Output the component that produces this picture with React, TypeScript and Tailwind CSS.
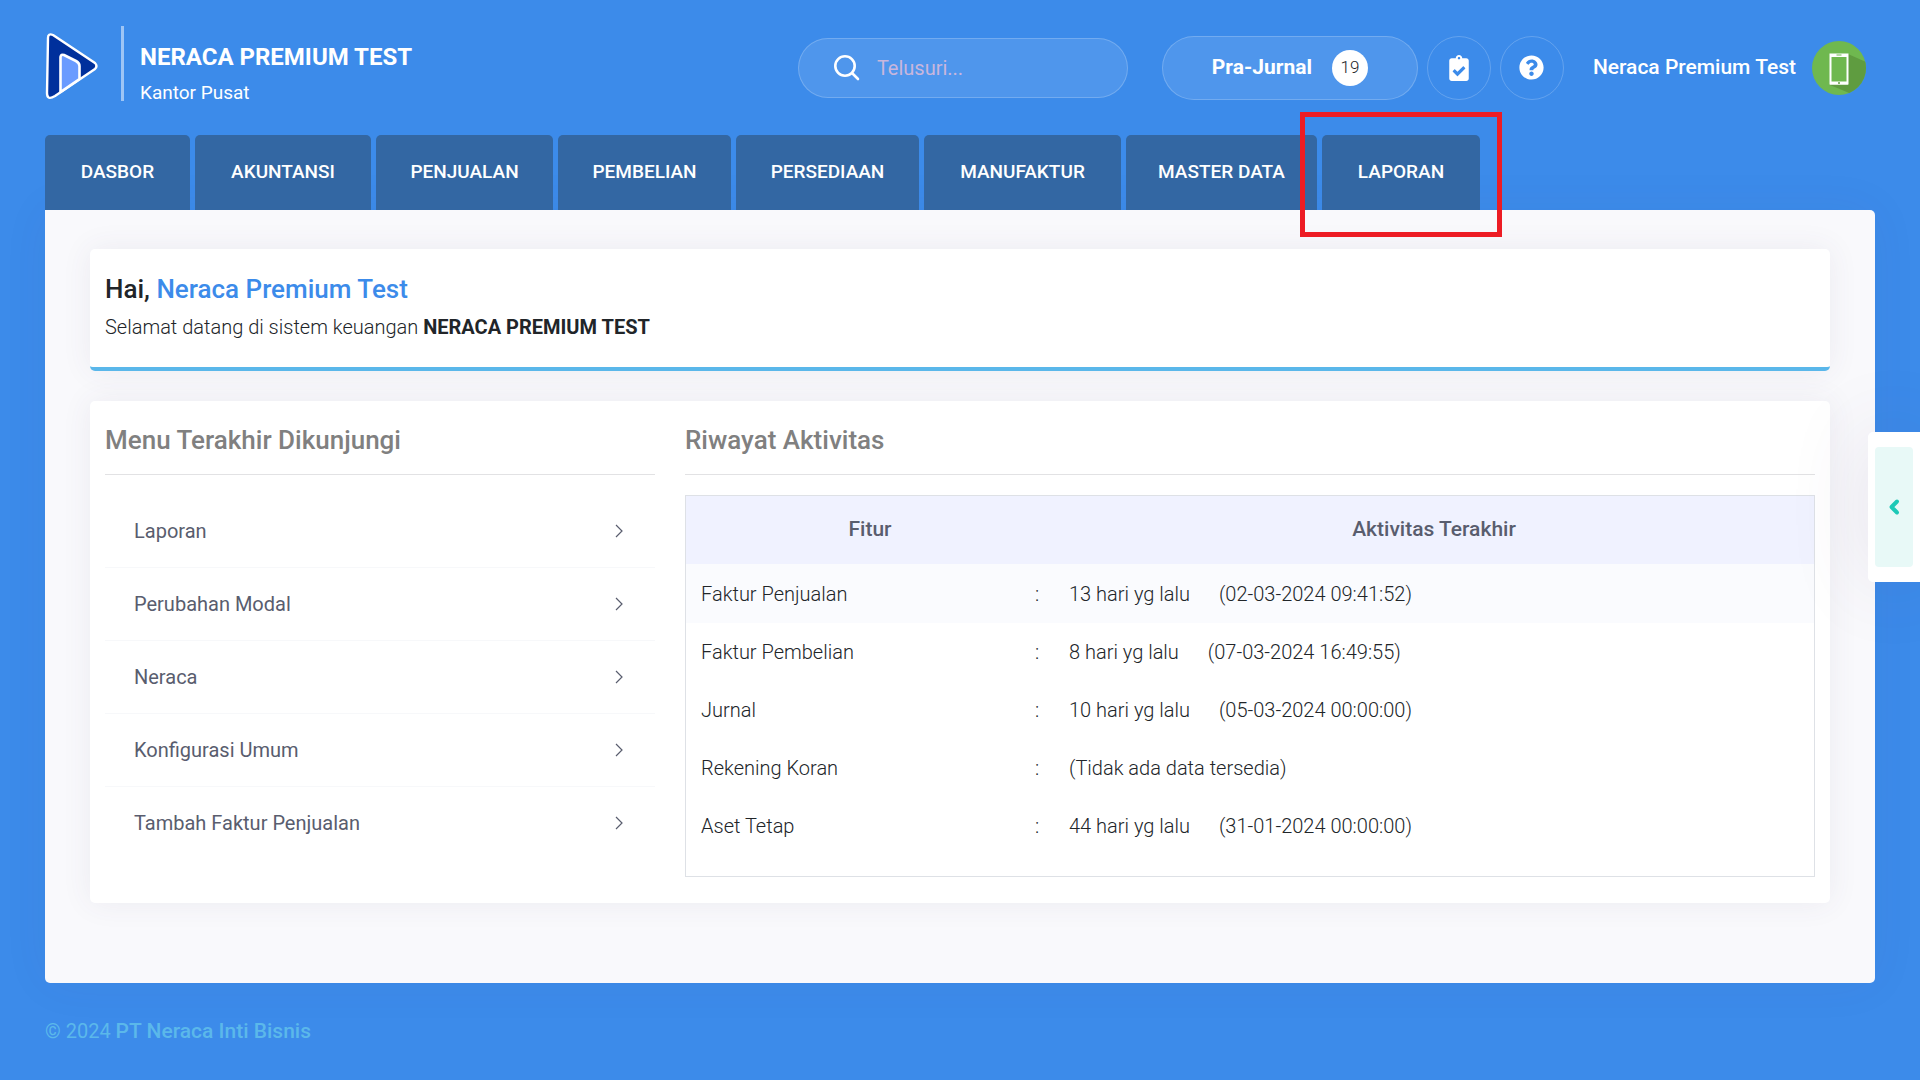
import React from 'react';
import { FaClipboardCheck, FaQuestionCircle } from 'react-icons/fa';

const tabs = [
  { label: 'DASBOR', width: 'w-[145px]' },
  { label: 'AKUNTANSI', width: 'w-[176px]' },
  { label: 'PENJUALAN', width: 'w-[177px]' },
  { label: 'PEMBELIAN', width: 'w-[173px]' },
  { label: 'PERSEDIAAN', width: 'w-[183px]' },
  { label: 'MANUFAKTUR', width: 'w-[197px]' },
  { label: 'MASTER DATA', width: 'w-[191px]' },
  { label: 'LAPORAN', width: 'w-[158px]', marked: true },
];

const recentMenus = ['Laporan', 'Perubahan Modal', 'Neraca', 'Konfigurasi Umum', 'Tambah Faktur Penjualan'];

const activities = [
  { feature: 'Faktur Penjualan', ago: '13 hari yg lalu', at: '(02-03-2024 09:41:52)' },
  { feature: 'Faktur Pembelian', ago: '8 hari yg lalu', at: '(07-03-2024 16:49:55)' },
  { feature: 'Jurnal', ago: '10 hari yg lalu', at: '(05-03-2024 00:00:00)' },
  { feature: 'Rekening Koran', ago: '(Tidak ada data tersedia)', at: '' },
  { feature: 'Aset Tetap', ago: '44 hari yg lalu', at: '(31-01-2024 00:00:00)' },
];

function Logo() {
  return (
    <svg viewBox="0 0 54 68" className="mt-1 h-[68px] w-[54px]" aria-hidden="true">
      <path
        d="M3 6 Q3 1 8 3 L50 31 Q53 34 50 37 L10 64 Q2 69 2 61 Z"
        fill="#00309c"
        stroke="#fff"
        strokeWidth="2.4"
        strokeLinejoin="round"
      />
      <path
        d="M15.500 60 V25 Q16 22 19 23 L31 29 Q34.500 31 34.500 34 V47 Z"
        fill="#6a9bff"
        stroke="#fff"
        strokeWidth="2.600"
        strokeLinejoin="round"
      />
    </svg>
  );
}

function Avatar() {
  return (
    <svg viewBox="0 0 54 54" className="size-[54px]" aria-hidden="true">
      <defs>
        <clipPath id="avatar-circle">
          <circle cx="27" cy="27" r="27" />
        </clipPath>
      </defs>
      <g clipPath="url(#avatar-circle)">
        <rect width="54" height="54" fill="#6fb84f" />
        <path d="M36 13 L54 21 V54 H42 L18 44 Z" fill="#5f9c40" />
        <rect x="18.5" y="13.5" width="17" height="29" fill="#6fb84f" stroke="#fff" strokeWidth="2" />
        <path d="M18 14.5 H36 M18 42 H36" stroke="#fff" strokeWidth="3" />
        <path d="M24.500 14 H29.500" stroke="#6fb84f" strokeWidth="1" />
        <circle cx="27" cy="42" r="1" fill="#5f9c40" />
      </g>
    </svg>
  );
}

function Header() {
  return (
    <header className="flex items-center pt-[26px]">
      <Logo />
      <div className="ml-[22px] h-[75px] w-[3px] bg-white/50" />
      <div className="ml-4 h-[75px] pt-[15px]">
        <h1 className="text-2xl leading-8 font-bold">NERACA PREMIUM TEST</h1>
        <p className="mt-1 text-[19px] leading-8">Kantor Pusat</p>
      </div>
      <div className="mt-2 ml-auto flex items-center">
        <label className="flex h-[60px] w-[330px] items-center gap-4 rounded-[30px] border border-white/20 bg-white/10 pl-[34px]">
          <svg viewBox="0 0 28 28" className="size-7 shrink-0" fill="none" stroke="#fff" strokeWidth="2.600" strokeLinecap="round" aria-hidden="true">
            <circle cx="12" cy="12" r="9.700" />
            <path d="M19.500 19.500 L25 25" />
          </svg>
          <input
            type="text"
            aria-label="Telusuri"
            placeholder="Telusuri..."
            className="w-full min-w-0 bg-transparent text-xl outline-none placeholder:text-[#c9b6dc]"
          />
        </label>
        <button className="ml-[34px] flex h-16 w-[256px] items-center justify-center gap-5 rounded-[32px] border border-white/20 bg-white/10 text-[21px] font-bold">
          Pra-Jurnal
          <span className="flex size-9 items-center justify-center rounded-full bg-white text-[17px] font-light text-[#212529]">19</span>
        </button>
        <button aria-label="Tugas" className="ml-[9px] flex size-16 items-center justify-center rounded-full border border-white/20">
          <FaClipboardCheck className="size-[26px]" />
        </button>
        <button aria-label="Bantuan" className="ml-[9px] flex size-16 items-center justify-center rounded-full border border-white/20">
          <FaQuestionCircle className="size-[25px]" />
        </button>
        <button className="mr-[9px] ml-[29px] flex items-center gap-4 text-[21px] font-medium">
          Neraca Premium Test
          <Avatar />
        </button>
      </div>
    </header>
  );
}

function Tabs() {
  return (
    <nav className="mt-[34px] flex gap-[5px]">
      {tabs.map((tab) => (
        <a
          key={tab.label}
          href="#"
          className={`relative flex h-[75px] items-center justify-center rounded-t-[5px] bg-[#3367a3] text-[19px] font-medium ${tab.width}`}
        >
          {tab.label}
          {tab.marked && <span className="absolute -top-[23px] -right-[22px] -bottom-[27px] -left-[22px] z-10 border-[5px] border-[#ed1c24]" />}
        </a>
      ))}
    </nav>
  );
}

function RecentMenus() {
  return (
    <section className="w-[550px] shrink-0">
      <h2 className="border-b border-[#e2e2e4] pt-5 pb-[14px] text-[26px] leading-[39px] font-medium text-[#808080]">Menu Terakhir Dikunjungi</h2>
      <ul className="mt-5">
        {recentMenus.map((item) => (
          <li key={item} className="border-b border-[#f7f8fa] last:border-b-0">
            <a href="#" className="flex h-[72px] items-center justify-between pr-[30px] pl-[29px] text-xl text-[#595d6e]">
              {item}
              <svg viewBox="0 0 12 16" className="h-4 w-3" fill="none" stroke="#595d6e" strokeWidth="1.200" aria-hidden="true">
                <path d="M3 2 L9 8 L3 14" />
              </svg>
            </a>
          </li>
        ))}
      </ul>
    </section>
  );
}

function ActivityHistory() {
  return (
    <section className="min-w-0 flex-1">
      <h2 className="border-b border-[#e2e2e4] pt-5 pb-[14px] text-[26px] leading-[39px] font-medium text-[#808080]">Riwayat Aktivitas</h2>
      <div className="mt-5 border border-[#dee1e6] pb-[21px]">
        <table className="w-full table-fixed border-collapse text-xl font-light">
          <colgroup>
            <col className="w-[334px]" />
            <col className="w-[34px]" />
            <col />
          </colgroup>
          <thead className="bg-[#f0f2ff] text-[21px] text-[#595d6e]">
            <tr className="h-[68px]">
              <th colSpan={2} className="font-medium">Fitur</th>
              <th className="font-medium">Aktivitas Terakhir</th>
            </tr>
          </thead>
          <tbody>
            {activities.map((row, i) => (
              <tr key={row.feature} className={i === 0 ? 'h-[59px] bg-[#fafbfe]' : 'h-[58px]'}>
                <td className="pl-[15px]">{row.feature}</td>
                <td className="text-center">:</td>
                <td className="pl-[15px]">
                  <span className="mr-[29px]">{row.ago}</span>
                  {row.at}
                </td>
              </tr>
            ))}
          </tbody>
        </table>
      </div>
    </section>
  );
}

export default function App() {
  return (
    <div className="min-h-screen overflow-x-hidden bg-[#3c8bea] px-[45px] font-['Roboto',sans-serif] text-white">
      <Header />
      <Tabs />
      <main className="rounded-[5px] rounded-tl-none bg-[#f9f9fc] px-[45px] pt-[39px] pb-20 text-[#212529] shadow-[0_0_50px_rgba(82,63,105,0.05)]">
        <section className="rounded-[5px] border-b-4 border-[#5ab7ea] bg-white px-[15px] pt-5 pb-[22px] shadow-[0_0_30px_rgba(82,63,105,0.08)]">
          <h2 className="text-[26px] leading-10 font-medium">
            Hai, <span className="text-[#3c8bea]">Neraca Premium Test</span>
          </h2>
          <p className="text-xl leading-9 font-light">
            Selamat datang di sistem keuangan <strong className="font-bold">NERACA PREMIUM TEST</strong>
          </p>
        </section>
        <div className="mt-[30px] flex gap-[30px] rounded-[5px] bg-white px-[15px] pb-[26px] shadow-[0_0_30px_rgba(82,63,105,0.08)]">
          <RecentMenus />
          <ActivityHistory />
        </div>
      </main>
      <footer className="pt-8 pb-8 text-xl leading-8 text-[#5bb8ea]">
        © 2024 <a href="#" className="text-[21px] font-medium">PT Neraca Inti Bisnis</a>
      </footer>
      <aside className="fixed top-[432px] right-0 rounded-l-[5px] bg-white px-[7px] py-[15px] shadow-[0_0_80px_rgba(82,63,105,0.13)]">
        <button aria-label="Buka panel" className="flex h-[120px] w-[38px] items-center justify-center rounded bg-[#e8f9f7]">
          <svg viewBox="0 0 12 18" className="h-[18px] w-3" fill="none" stroke="#1dc9b7" strokeWidth="4" strokeLinejoin="round" strokeLinecap="round" aria-hidden="true">
            <path d="M9 3.500 L3.500 9 L9 14.500" />
          </svg>
        </button>
      </aside>
    </div>
  );
}
